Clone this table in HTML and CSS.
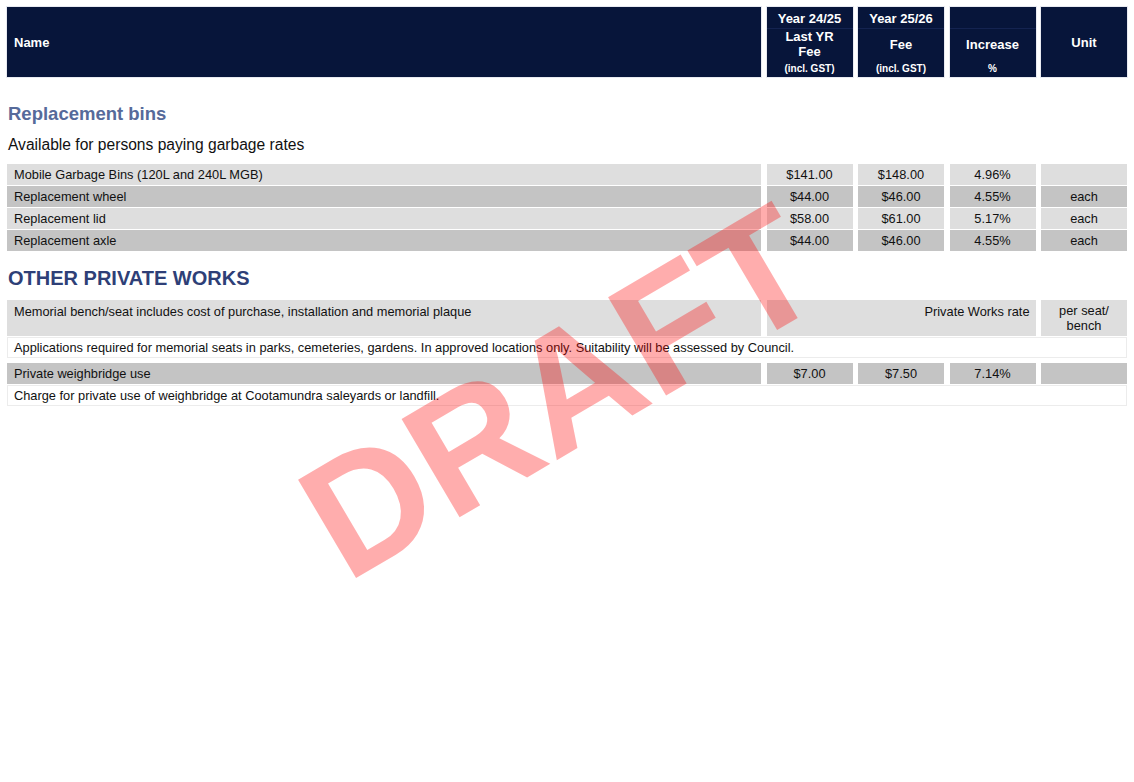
FILE: index.html
```html
<!DOCTYPE html>
<html lang="en">
<head>
<meta charset="utf-8">
<title>Fees and Charges</title>
<link rel="stylesheet" href="styles.css">
</head>
<body>
<div class="page">
  <div class="thead">
    <div class="th th-name">Name</div>
    <div class="th th-col">
      <div class="th-top">Year 24/25</div>
      <div class="th-bottom"><div class="th-lbl">Last YR<br>Fee</div><div class="th-sub">(incl. GST)</div></div>
    </div>
    <div class="th th-col">
      <div class="th-top">Year 25/26</div>
      <div class="th-bottom"><div class="th-lbl">Fee</div><div class="th-sub">(incl. GST)</div></div>
    </div>
    <div class="th th-col">
      <div class="th-top"></div>
      <div class="th-bottom"><div class="th-lbl">Increase</div><div class="th-sub">%</div></div>
    </div>
    <div class="th th-unit">Unit</div>
  </div>

  <h2 class="cat">Replacement bins</h2>
  <p class="desc">Available for persons paying garbage rates</p>

  <div class="group">
    <div class="row light">
      <div class="cell name">Mobile Garbage Bins (120L and 240L MGB)</div>
      <div class="cell val">$141.00</div>
      <div class="cell val">$148.00</div>
      <div class="cell val">4.96%</div>
      <div class="cell val"></div>
    </div>
    <div class="row dark">
      <div class="cell name">Replacement wheel</div>
      <div class="cell val">$44.00</div>
      <div class="cell val">$46.00</div>
      <div class="cell val">4.55%</div>
      <div class="cell val">each</div>
    </div>
    <div class="row light">
      <div class="cell name">Replacement lid</div>
      <div class="cell val">$58.00</div>
      <div class="cell val">$61.00</div>
      <div class="cell val">5.17%</div>
      <div class="cell val">each</div>
    </div>
    <div class="row dark">
      <div class="cell name">Replacement axle</div>
      <div class="cell val">$44.00</div>
      <div class="cell val">$46.00</div>
      <div class="cell val">4.55%</div>
      <div class="cell val">each</div>
    </div>
  </div>

  <h2 class="section">OTHER PRIVATE WORKS</h2>

  <div class="group">
    <div class="row light tall">
      <div class="cell name top">Memorial bench/seat includes cost of purchase, installation and memorial plaque</div>
      <div class="cell merged">Private Works rate</div>
      <div class="cell unit2">per seat/<br>bench</div>
    </div>
    <div class="note">Applications required for memorial seats in parks, cemeteries, gardens. In approved locations only. Suitability will be assessed by Council.</div>
  </div>

  <div class="group">
    <div class="row dark">
      <div class="cell name">Private weighbridge use</div>
      <div class="cell val">$7.00</div>
      <div class="cell val">$7.50</div>
      <div class="cell val">7.14%</div>
      <div class="cell val"></div>
    </div>
    <div class="note">Charge for private use of weighbridge at Cootamundra saleyards or landfill.</div>
  </div>

  <div class="watermark">DRAFT</div>
</div>
</body>
</html>
```

FILE: styles.css
```css
* { box-sizing: border-box; }

html, body {
  margin: 0;
  padding: 0;
  background: #ffffff;
}

body {
  font-family: "Liberation Sans", Arial, sans-serif;
  color: #111111;
}

.page {
  position: relative;
  width: 1134px;
  height: 782px;
  padding: 7px 0 0 7px;
  overflow: hidden;
}

.thead,
.row {
  display: grid;
  grid-template-columns: 754px 86px 86px 86px 86px;
  column-gap: 5.5px;
  width: 1120px;
}

.thead {
  height: 70px;
}

.th {
  background: #07153a;
  color: #ffffff;
  font-weight: bold;
  font-size: 13px;
  box-shadow: 0 0 0 1px rgba(190, 196, 214, 0.35);
}

.th-name {
  display: flex;
  align-items: center;
  padding-left: 7px;
}

.th-unit {
  display: flex;
  align-items: center;
  justify-content: center;
}

.th-col {
  display: flex;
  flex-direction: column;
  text-align: center;
}

.th-top {
  height: 22px;
  line-height: 23px;
  border-bottom: 1px solid #142350;
}

.th-bottom {
  flex: 1;
  display: flex;
  flex-direction: column;
}

.th-lbl {
  height: 30px;
  display: flex;
  align-items: center;
  justify-content: center;
  line-height: 15px;
}

.th-sub {
  flex: 1;
  display: flex;
  align-items: center;
  justify-content: center;
  font-size: 10px;
}

.cat {
  margin: 26px 0 0 1px;
  font-size: 18.5px;
  line-height: 22px;
  color: #566a9a;
  font-weight: bold;
}

.desc {
  margin: 11px 0 0 1px;
  font-size: 15.6px;
  line-height: 18px;
  color: #111111;
}

.group {
  display: flex;
  flex-direction: column;
  gap: 1px;
  width: 1120px;
  margin-top: 10px;
}

.group + .group {
  margin-top: 5px;
}

.row {
  height: 21px;
  font-size: 12.8px;
}

.cell {
  display: flex;
  align-items: center;
  color: #111111;
}

.light .cell { background: #dedede; }
.dark .cell { background: #c4c4c4; }

.cell.name {
  padding-left: 7px;
}

.cell.val {
  justify-content: center;
}

.row.tall {
  height: 36px;
}

.cell.top {
  align-items: flex-start;
  padding-top: 4px;
}

.cell.merged {
  grid-column: 2 / span 3;
  align-items: flex-start;
  justify-content: flex-end;
  padding: 4px 6px 0 0;
}

.cell.unit2 {
  align-items: flex-start;
  justify-content: center;
  text-align: center;
  padding-top: 4px;
  line-height: 14.5px;
}

.note {
  height: 21px;
  display: flex;
  align-items: center;
  padding-left: 6px;
  font-size: 12.8px;
  color: #111111;
  background: #ffffff;
  border: 1px solid #ececec;
}

.section {
  margin: 15px 0 0 1px;
  font-size: 20px;
  line-height: 24px;
  color: #2e3f77;
  font-weight: bold;
}

.watermark {
  position: absolute;
  left: 560px;
  top: 392px;
  transform: translate(-50%, -50%) rotate(-30.5deg);
  font-family: "Liberation Sans", Arial, sans-serif;
  font-weight: bold;
  font-size: 166px;
  line-height: 1;
  color: rgba(255, 0, 0, 0.32);
  white-space: nowrap;
  pointer-events: none;
}
```
